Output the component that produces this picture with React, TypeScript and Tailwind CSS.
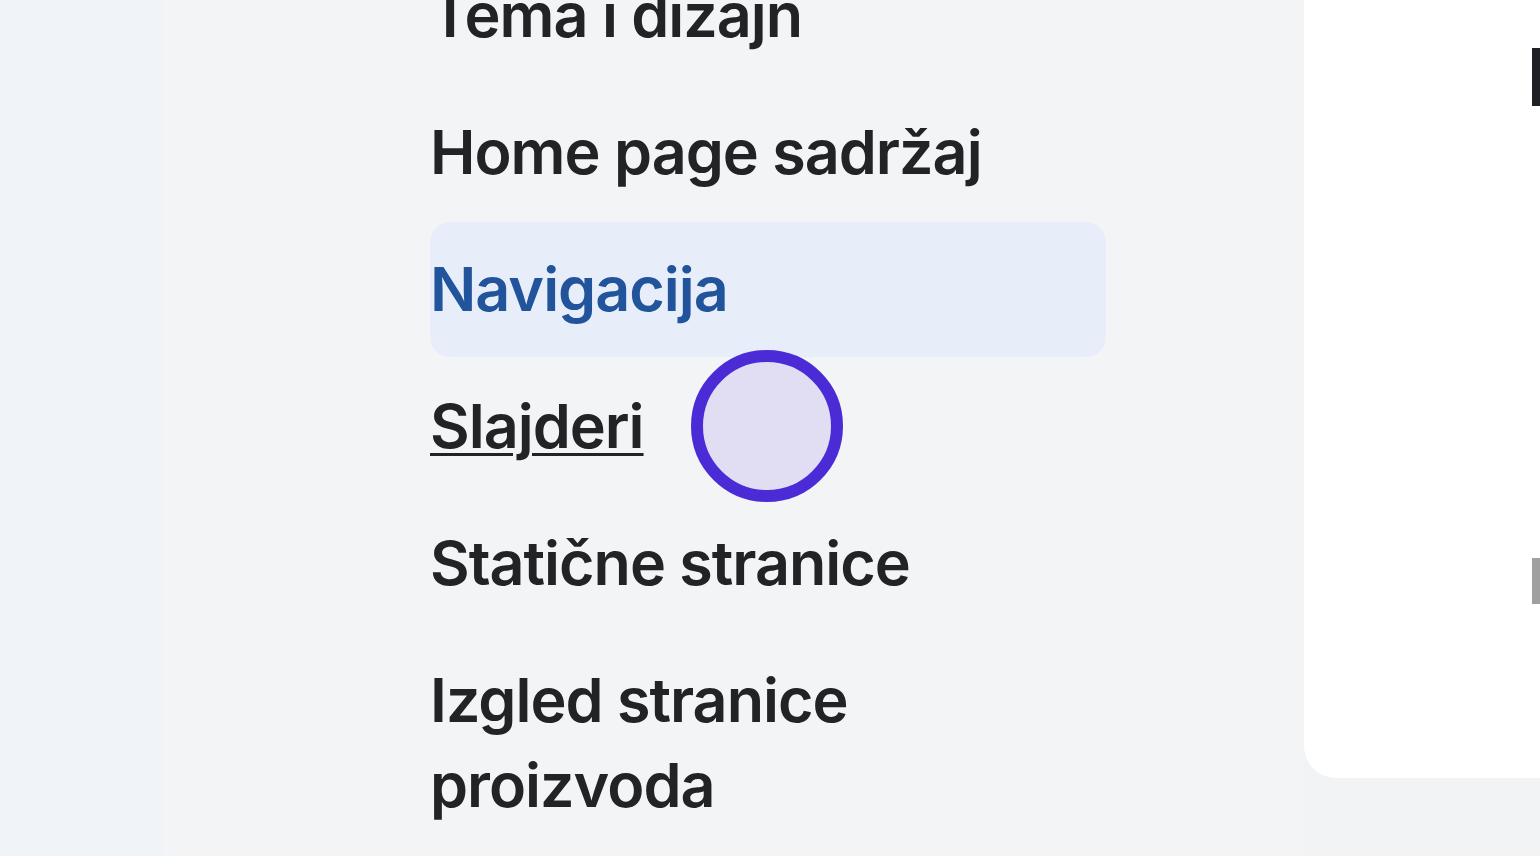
import React from "react";

const items = [
  "Tema i dizajn",
  "Home page sadržaj",
  "Navigacija",
  "Slajderi",
  "Statične stranice",
  "Izgled stranice proizvoda",
];

export default function App() {
  return (
    <div
      className="w-[1540px] h-[856px] overflow-hidden flex bg-[#f0f3f8]"
      style={{ fontFamily: "Inter, 'Noto Sans', sans-serif" }}
    >
      <div className="w-[163px] shrink-0 bg-[#f0f3f8]" />
      <div className="relative w-[1141px] shrink-0 bg-[#f3f4f6] pl-[267px]">
        <ul className="mt-[-52px] w-[676px] flex flex-col gap-[2px]">
          {items.map((t) => {
            const active = t === "Navigacija";
            const under = t === "Slajderi";
            return (
              <li
                key={t}
                className={
                  "py-[25px] rounded-[20px] text-[61px] leading-[85px] font-semibold tracking-[-1px] " +
                  (active ? "bg-[#e7eefa] text-[#22549c]" : "text-[#222325]")
                }
              >
                <span
                  className={
                    under
                      ? "underline decoration-[3px] underline-offset-[5px]"
                      : ""
                  }
                >
                  {t}
                </span>
              </li>
            );
          })}
        </ul>
        <div className="absolute left-[528px] top-[350px] w-[152px] h-[152px] rounded-full border-[12px] border-[#4a2bd6] bg-[#e1ddf3]" />
      </div>
      <div className="flex-1 bg-[#f2f3f5] flex flex-col">
        <div className="h-[778px] bg-white rounded-bl-[32px] flex flex-col pl-[228px]">
          <div className="mt-[48px] w-[10px] h-[58px] bg-[#202124]" />
          <div className="mt-[452px] w-[10px] h-[46px] bg-[#a0a0a0]" />
        </div>
      </div>
    </div>
  );
}
